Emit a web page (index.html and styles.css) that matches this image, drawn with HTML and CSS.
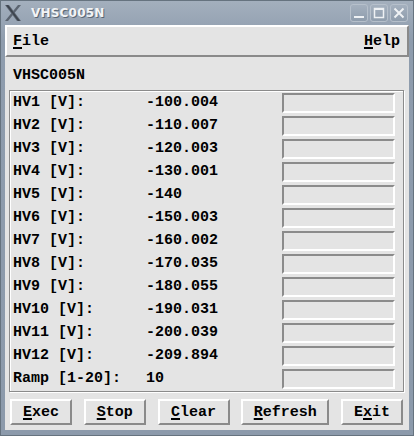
FILE: index.html
```html
<!DOCTYPE html>
<html lang="en">
<head>
    <meta charset="UTF-8">
    <title>VHSC005N</title>
    <link rel="stylesheet" href="styles.css">
</head>
<body>
    <div class="window">
        <div class="titlebar">
            <svg class="logo" width="16" height="16" viewBox="0 0 16 16">
                <polygon points="0,0 4,0 16,16 12,16" fill="#5b6470"/>
                <polygon points="13,0 16,0 3,16 0,16" fill="#5b6470"/>
                <polygon points="1,0 3,0 15,16 13,16" fill="#3d444d"/>
            </svg>
            <span class="title">VHSC005N</span>
            <div class="wm-buttons">
                <div class="wm-btn">
                    <svg width="18" height="18" viewBox="0 0 18 18"><rect x="4" y="12" width="10" height="2" fill="#eef1f4"/></svg>
                </div>
                <div class="wm-btn">
                    <svg width="18" height="18" viewBox="0 0 18 18"><rect x="4.5" y="4.5" width="9" height="9" fill="none" stroke="#eef1f4" stroke-width="1.5"/><rect x="4" y="4" width="10" height="2" fill="#eef1f4"/></svg>
                </div>
                <div class="wm-btn">
                    <svg width="18" height="18" viewBox="0 0 18 18"><path d="M4.5 4.5 L13.5 13.5 M13.5 4.5 L4.5 13.5" stroke="#eef1f4" stroke-width="2"/></svg>
                </div>
            </div>
        </div>

        <div class="client">
            <div class="menubar">
                <span><u>F</u>ile</span>
                <span><u>H</u>elp</span>
            </div>

            <div class="device">VHSC005N</div>

            <div class="frame">
                <span>HV1 [V]:</span><span>-100.004</span><div class="entry"></div>
                <span>HV2 [V]:</span><span>-110.007</span><div class="entry"></div>
                <span>HV3 [V]:</span><span>-120.003</span><div class="entry"></div>
                <span>HV4 [V]:</span><span>-130.001</span><div class="entry"></div>
                <span>HV5 [V]:</span><span>-140</span><div class="entry"></div>
                <span>HV6 [V]:</span><span>-150.003</span><div class="entry"></div>
                <span>HV7 [V]:</span><span>-160.002</span><div class="entry"></div>
                <span>HV8 [V]:</span><span>-170.035</span><div class="entry"></div>
                <span>HV9 [V]:</span><span>-180.055</span><div class="entry"></div>
                <span>HV10 [V]:</span><span>-190.031</span><div class="entry"></div>
                <span>HV11 [V]:</span><span>-200.039</span><div class="entry"></div>
                <span>HV12 [V]:</span><span>-209.894</span><div class="entry"></div>
                <span>Ramp [1-20]:</span><span>10</span><div class="entry"></div>
            </div>

            <div class="buttons">
                <div class="btn btn-exec"><u>E</u>xec</div>
                <div class="btn btn-stop"><u>S</u>top</div>
                <div class="btn btn-clear"><u>C</u>lear</div>
                <div class="btn btn-refresh"><u>R</u>efresh</div>
                <div class="btn btn-exit">E<u>x</u>it</div>
            </div>
        </div>
    </div>
</body>
</html>
```

FILE: styles.css
```css
body {
    margin: 0;
    padding: 0;
    background-color: #8c9aab;
}

.window {
    width: 414px;
    height: 436px;
    box-sizing: border-box;
    padding: 0 4px 5px 4px;
    background: linear-gradient(#a3afbd, #8e9cad 40px, #8c9aab);
    border: 1px solid #66737f;
    display: flex;
    flex-direction: column;
}

.titlebar {
    height: 24px;
    display: flex;
    align-items: center;
    margin: 0 -3px;
    padding: 0 4px 0 3px;
}

.logo {
    margin-top: 0;
    margin-right: 10px;
}

.title {
    font-family: "DejaVu Sans", sans-serif;
    font-size: 12px;
    font-weight: bold;
    color: #f2f4f6;
    text-shadow: 1px 1px 0 #5a6673;
    letter-spacing: 0.2px;
}

.wm-buttons {
    margin-left: auto;
    display: flex;
    gap: 2px;
}

.wm-btn {
    width: 16px;
    height: 16px;
    border: 1px solid #b6c0cb;
    border-radius: 3px;
    background: linear-gradient(#a4b0be, #8f9dad);
    display: flex;
    align-items: center;
    justify-content: center;
}

.wm-btn svg {
    flex: none;
}

.client {
    flex: 1;
    background-color: #e4e4e4;
    display: flex;
    flex-direction: column;
    font-family: "Liberation Mono", "DejaVu Sans Mono", monospace;
    font-size: 15px;
    font-weight: bold;
    color: #000;
}

.client u {
    text-underline-offset: 2px;
    text-decoration-thickness: 2px;
}

.menubar {
    height: 32px;
    box-sizing: border-box;
    border-top: 2px solid #ffffff;
    border-left: 2px solid #ffffff;
    border-bottom: 2px solid #8a8a8a;
    border-right: 2px solid #8a8a8a;
    padding: 0 7px 0 6px;
    display: flex;
    justify-content: space-between;
    align-items: center;
}

.device {
    height: 17px;
    line-height: 17px;
    padding: 10px 0 6px 8px;
}

.frame {
    margin: 0 5px 0 4px;
    border: 1px solid #8b8b8b;
    box-shadow: 1px 1px 0 #ffffff, inset 1px 1px 0 #ffffff;
    padding: 2px 0 2px 3px;
    display: grid;
    grid-template-columns: 133px 136px 113px;
    grid-auto-rows: 20px;
    row-gap: 3px;
    align-items: center;
    line-height: 20px;
}

.entry {
    height: 20px;
    box-sizing: border-box;
    border-top: 2px solid #8b8b8b;
    border-left: 2px solid #8b8b8b;
    border-bottom: 2px solid #ffffff;
    border-right: 2px solid #ffffff;
    background-color: #e4e4e4;
}

.buttons {
    display: flex;
    justify-content: space-between;
    padding: 7px 6px 0 5px;
}

.btn {
    height: 26px;
    box-sizing: border-box;
    border-top: 2px solid #ffffff;
    border-left: 2px solid #ffffff;
    border-bottom: 2px solid #8a8a8a;
    border-right: 2px solid #8a8a8a;
    display: flex;
    align-items: center;
    justify-content: center;
}

.btn-exec,
.btn-stop,
.btn-exit {
    width: 62px;
}

.btn-clear {
    width: 72px;
}

.btn-refresh {
    width: 88px;
}
```
